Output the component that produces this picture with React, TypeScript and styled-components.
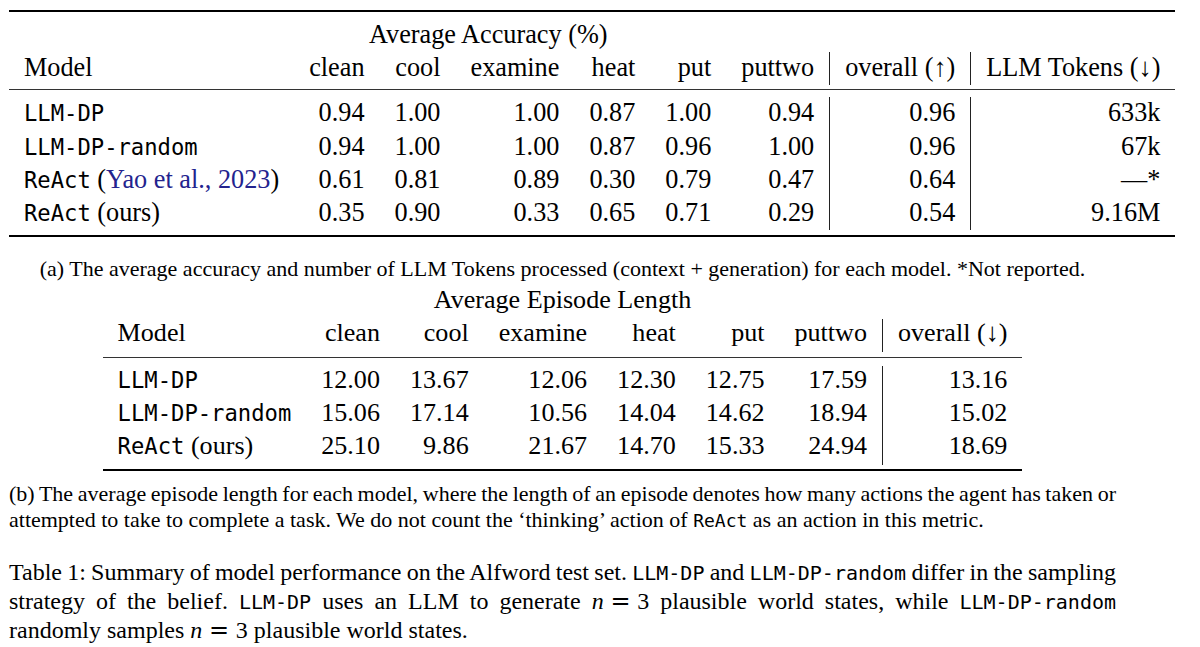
import React from 'react'
import styled, { createGlobalStyle } from 'styled-components'

const GlobalStyle = createGlobalStyle`
  body {
    margin: 0;
    background: #fff;
    color: #000;
    font-family: "Liberation Serif", "Times New Roman", serif;
  }
`

const Page = styled.main`
  width: 1107px;
  padding: 10px 0 0 9px;
`

const Table = styled.div<{
  $cols: number
  $size: number
  $shift: number
  $topRule?: boolean
  $centered?: boolean
  $padTop: number
  $padBottom: number
}>`
  --shift: ${p => p.$shift}px;
  display: grid;
  grid-template-columns: repeat(${p => p.$cols}, max-content);
  width: max-content;
  margin: ${p => (p.$centered ? '3.9px auto 0' : '0')};
  padding: ${p => p.$padTop}px 0 ${p => p.$padBottom}px;
  border-top: ${p => (p.$topRule ? '2px solid #000' : 'none')};
  border-bottom: 2px solid #000;
  font-size: ${p => p.$size}px;
`

const Cell = styled.div<{ $left?: boolean; $ruled?: boolean }>`
  padding: var(--shift) 15px calc(5.6px - var(--shift));
  line-height: 27.5px;
  white-space: nowrap;
  text-align: ${p => (p.$left ? 'left' : 'right')};
  border-left: ${p => (p.$ruled ? '1px solid #222' : 'none')};
`

const Title = styled.div<{ $indent?: number; $center?: boolean }>`
  grid-column: 1 / -1;
  padding: var(--shift) 0 calc(5.6px - var(--shift)) ${p => p.$indent ?? 0}px;
  line-height: 27.5px;
  text-align: ${p => (p.$center ? 'center' : 'left')};
`

const Rule = styled.div<{ $top: number; $bottom: number }>`
  grid-column: 1 / -1;
  height: 1px;
  background: #333;
  margin: ${p => p.$top}px 0 ${p => p.$bottom}px;
`

const TableMono = styled.span`
  font-family: "DejaVu Sans Mono", monospace;
  font-size: 22.2px;
  line-height: 1;
  word-spacing: 0;
`

const SmallMono = styled(TableMono)`
  font-size: 18px;
`

const CapMono = styled(TableMono)`
  font-size: 20px;
`

const Cite = styled.span`
  color: #23238e;
`

const SubCaption = styled.div`
  margin-top: 18.6px;
  font-size: 22px;
  line-height: 26px;
  text-align: center;
`

const Caption = styled.div<{ $size: number; $lead: number; $gap: number }>`
  margin-top: ${p => p.$gap}px;
  font-size: ${p => p.$size}px;
  line-height: ${p => p.$lead}px;
`

const Line = styled.div<{ $last?: boolean; $tight?: number }>`
  text-align: justify;
  text-align-last: ${p => (p.$last ? 'left' : 'justify')};
  word-spacing: ${p => p.$tight ?? 0}px;
`

const Var = styled.i`
  font-family: "Liberation Serif", serif;
`

const Eq = styled.span`
  font-family: "DejaVu Serif", serif;
  margin: 0 0.28em;
`

type Row = {
  name: string
  note?: string
  cite?: string
  vals: string[]
  overall: string
  tokens?: string
}

const accuracyRows: Row[] = [
  { name: 'LLM-DP', vals: ['0.94', '1.00', '1.00', '0.87', '1.00', '0.94'], overall: '0.96', tokens: '633k' },
  { name: 'LLM-DP-random', vals: ['0.94', '1.00', '1.00', '0.87', '0.96', '1.00'], overall: '0.96', tokens: '67k' },
  { name: 'ReAct', cite: 'Yao et al., 2023', vals: ['0.61', '0.81', '0.89', '0.30', '0.79', '0.47'], overall: '0.64', tokens: '—*' },
  { name: 'ReAct', note: '(ours)', vals: ['0.35', '0.90', '0.33', '0.65', '0.71', '0.29'], overall: '0.54', tokens: '9.16M' },
]

const episodeRows: Row[] = [
  { name: 'LLM-DP', vals: ['12.00', '13.67', '12.06', '12.30', '12.75', '17.59'], overall: '13.16' },
  { name: 'LLM-DP-random', vals: ['15.06', '17.14', '10.56', '14.04', '14.62', '18.94'], overall: '15.02' },
  { name: 'ReAct', note: '(ours)', vals: ['25.10', '9.86', '21.67', '14.70', '15.33', '24.94'], overall: '18.69' },
]

const tasks = ['clean', 'cool', 'examine', 'heat', 'put', 'puttwo']

const ModelName = ({ row }: { row: Row }) => (
  <>
    <TableMono>{row.name}</TableMono>
    {row.note && <> {row.note}</>}
    {row.cite && <> (<Cite>{row.cite}</Cite>)</>}
  </>
)

export default function App() {
  return (
    <Page>
      <GlobalStyle />

      <Table $cols={9} $size={26.25} $shift={2} $topRule $padTop={7.2} $padBottom={5.1}>
        <Title $indent={360}>Average Accuracy (%)</Title>
        <Cell $left>Model</Cell>
        {tasks.map(t => <Cell key={t}>{t}</Cell>)}
        <Cell $ruled>overall (↑)</Cell>
        <Cell $ruled>LLM Tokens (↓)</Cell>
        <Rule $top={3.6} $bottom={7.5} />
        {accuracyRows.map((r, i) => (
          <React.Fragment key={i}>
            <Cell $left><ModelName row={r} /></Cell>
            {r.vals.map((v, j) => <Cell key={j}>{v}</Cell>)}
            <Cell $ruled>{r.overall}</Cell>
            <Cell $ruled>{r.tokens}</Cell>
          </React.Fragment>
        ))}
      </Table>

      <SubCaption>
        (a) The average accuracy and number of LLM Tokens processed (context + generation) for each model. *Not reported.
      </SubCaption>

      <Table $cols={8} $size={26.1} $shift={0.5} $centered $padTop={0} $padBottom={3.9}>
        <Title $center>Average Episode Length</Title>
        <Cell $left>Model</Cell>
        {tasks.map(t => <Cell key={t}>{t}</Cell>)}
        <Cell $ruled>overall (↓)</Cell>
        <Rule $top={5} $bottom={8.1} />
        {episodeRows.map((r, i) => (
          <React.Fragment key={i}>
            <Cell $left><ModelName row={r} /></Cell>
            {r.vals.map((v, j) => <Cell key={j}>{v}</Cell>)}
            <Cell $ruled>{r.overall}</Cell>
          </React.Fragment>
        ))}
      </Table>

      <Caption $size={22} $lead={26} $gap={10.6}>
        <Line $tight={-1.3}>
          (b) The average episode length for each model, where the length of an episode denotes how many actions the agent has taken or
        </Line>
        <Line $last>
          attempted to take to complete a task. We do not count the ‘thinking’ action of <SmallMono>ReAct</SmallMono> as an action in this metric.
        </Line>
      </Caption>

      <Caption $size={24} $lead={28.8} $gap={24.9}>
        <Line $tight={-1.2}>
          Table 1: Summary of model performance on the Alfword test set. <CapMono>LLM-DP</CapMono> and <CapMono>LLM-DP-random</CapMono> differ in the sampling
        </Line>
        <Line>
          strategy of the belief. <CapMono>LLM-DP</CapMono> uses an LLM to generate <Var>n</Var><Eq>=</Eq>3 plausible world states, while <CapMono>LLM-DP-random</CapMono>
        </Line>
        <Line $last>
          randomly samples <Var>n</Var><Eq>=</Eq>3 plausible world states.
        </Line>
      </Caption>
    </Page>
  )
}
